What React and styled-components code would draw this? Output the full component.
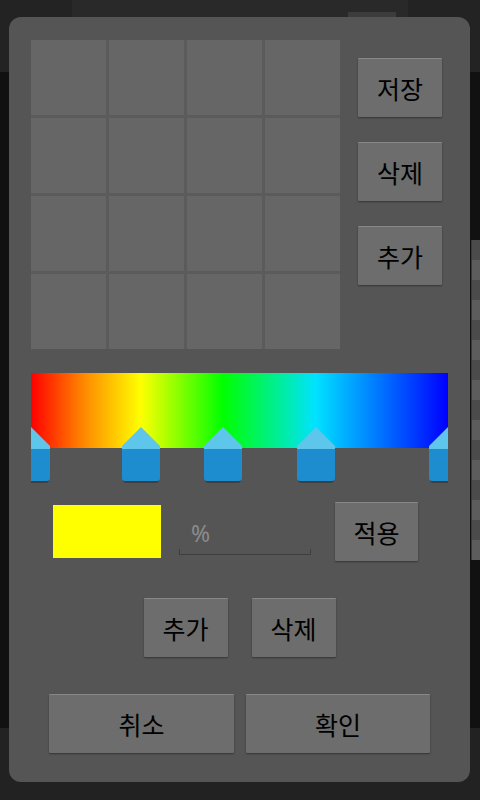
import React from 'react'
import styled, { createGlobalStyle } from 'styled-components'

const GlobalStyle = createGlobalStyle`
  * {
    box-sizing: border-box;
    margin: 0;
    padding: 0;
  }
  html, body {
    width: 480px;
    height: 800px;
    overflow: hidden;
    background: #111;
  }
  body {
    font-family: "Noto Sans CJK KR", "Noto Sans", sans-serif;
  }
`

const stops = [0, 26.3, 46, 68.3, 100]
const gridCells = Array.from({ length: 16 }, (_, i) => i)
const stripeCells = Array.from({ length: 16 }, (_, i) => i)

const Handle = ({ at }) => (
  <HandleBox style={{ left: `${at}%` }}>
    <svg width="38" height="58" viewBox="0 0 38 58">
      <rect x="1" y="24" width="36" height="32" rx="3" fill="rgba(0,0,0,0.25)" />
      <path d="M0 21 H38 V51 Q38 54 35 54 H3 Q0 54 0 51 Z" fill="#1e8dcf" />
      <path d="M0 19 L19 0 L38 19 V22 H0 Z" fill="#5ec6ea" />
    </svg>
  </HandleBox>
)

const App = () => {
  return (
    <>
      <GlobalStyle />
      <Screen>
        <TopBar>
          <TopBarMiddle>
            <TopAction />
          </TopBarMiddle>
        </TopBar>
        <Middle>
          <Stripe>
            {stripeCells.map((i) => (
              <StripeCell key={i} $light={i % 2 === 1} />
            ))}
          </Stripe>
        </Middle>
        <BottomBar />

        <Dialog>
          <TopSection>
            <Palette>
              {gridCells.map((i) => (
                <Cell key={i} />
              ))}
            </Palette>
            <SideButtons>
              <Button $w={84}>저장</Button>
              <Button $w={84}>삭제</Button>
              <Button $w={84}>추가</Button>
            </SideButtons>
          </TopSection>

          <Picker>
            <GradientBar />
            <Handles>
              {stops.map((s) => (
                <Handle key={s} at={s} />
              ))}
            </Handles>
          </Picker>

          <StopRow>
            <Swatch />
            <PercentField>
              <span>%</span>
            </PercentField>
            <Button $w={83}>적용</Button>
          </StopRow>

          <CenterRow $gap={24}>
            <Button $w={84}>추가</Button>
            <Button $w={84}>삭제</Button>
          </CenterRow>

          <CenterRow $gap={12}>
            <Button $w={185}>취소</Button>
            <Button $w={184}>확인</Button>
          </CenterRow>
        </Dialog>
      </Screen>
    </>
  )
}

const Screen = styled.div`
  position: relative;
  width: 480px;
  height: 800px;
  display: flex;
  flex-direction: column;
  background: #111;
  overflow: hidden;
`

const TopBar = styled.div`
  height: 72px;
  background: #232323;
  display: flex;
  justify-content: center;
`

const TopBarMiddle = styled.div`
  width: 336px;
  background: #292929;
  display: flex;
  justify-content: flex-end;
  padding: 12px 12px 0 0;
`

const TopAction = styled.div`
  width: 48px;
  height: 40px;
  background: #3c3c3c;
`

const Middle = styled.div`
  flex: 1;
  display: flex;
  justify-content: flex-end;
  padding-top: 168px;
`

const Stripe = styled.div`
  width: 9px;
  display: flex;
  flex-direction: column;
  align-self: flex-start;
  border-left: 1px solid #3a3a3a;
`

const StripeCell = styled.div`
  height: 20px;
  background: ${(p) => (p.$light ? '#5c5c5c' : '#4b4b4b')};
`

const BottomBar = styled.div`
  height: 72px;
  background: #222;
`

const Dialog = styled.div`
  position: absolute;
  left: 9px;
  top: 17px;
  width: 461px;
  height: 765px;
  border-radius: 12px;
  background: #555;
  padding: 23px 22px 0 22px;
  display: flex;
  flex-direction: column;
`

const TopSection = styled.div`
  display: flex;
  align-items: flex-start;
  gap: 18px;
`

const Palette = styled.div`
  display: grid;
  grid-template-columns: repeat(4, 75px);
  grid-auto-rows: 75px;
  gap: 3px;
  background: #5b5b5b;
`

const Cell = styled.div`
  background: #666;
`

const SideButtons = styled.div`
  display: flex;
  flex-direction: column;
  gap: 25px;
  padding-top: 18px;
`

const Button = styled.button`
  width: ${(p) => p.$w}px;
  height: 59px;
  flex: none;
  border: none;
  border-top: 1px solid #888;
  border-radius: 1px;
  background: #6d6d6d;
  box-shadow: 0 1px 2px rgba(0, 0, 0, 0.4);
  color: #000;
  font-family: "Noto Sans CJK KR", "Noto Sans", sans-serif;
  font-size: 25px;
  line-height: 1;
  display: flex;
  align-items: center;
  justify-content: center;
`

const Picker = styled.div`
  position: relative;
  margin-top: 24px;
  height: 111px;
`

const GradientBar = styled.div`
  height: 75px;
  background: linear-gradient(
    to right,
    #ff0000 0%,
    #ff8c00 13%,
    #ffff00 26.3%,
    #00ff00 46%,
    #00e2ff 68.3%,
    #0000ff 100%
  );
`

const Handles = styled.div`
  position: absolute;
  left: 0;
  right: 0;
  top: 54px;
  height: 58px;
  overflow: hidden;
`

const HandleBox = styled.div`
  position: absolute;
  top: 0;
  width: 38px;
  height: 58px;
  transform: translateX(-50%);

  svg {
    display: block;
  }
`

const StopRow = styled.div`
  margin-top: 18px;
  display: flex;
  align-items: center;
  padding-left: 22px;
  height: 59px;
`

const Swatch = styled.div`
  width: 108px;
  height: 53px;
  background: #ffff00;
`

const PercentField = styled.div`
  position: relative;
  margin: 4px 24px 0 18px;
  width: 132px;
  height: 42px;
  padding-left: 12px;
  display: flex;
  align-items: center;
  color: #8c8c8c;
  font-family: "Noto Sans", "Noto Sans CJK KR", sans-serif;
  font-size: 23px;
  border-bottom: 1px solid #3e3e3e;

  &::before,
  &::after {
    content: '';
    position: absolute;
    bottom: 0;
    width: 1px;
    height: 5px;
    background: #3e3e3e;
  }
  &::before {
    left: 0;
  }
  &::after {
    right: 0;
  }
`

const CenterRow = styled.div`
  margin-top: 37px;
  display: flex;
  justify-content: center;
  gap: ${(p) => p.$gap}px;
`

export default App
